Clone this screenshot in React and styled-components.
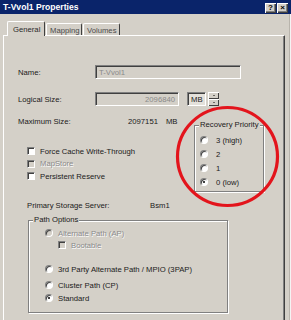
import React from "react";
import styled, { createGlobalStyle } from "styled-components";

const GlobalStyle = createGlobalStyle`
  html, body {
    margin: 0;
    padding: 0;
    background: #d4d0c8;
  }
  body {
    font-family: "Liberation Sans", Arial, sans-serif;
    font-size: 7.7px;
    color: #1a1a1a;
  }
`;

const Window = styled.div`
  position: relative;
  width: 291px;
  height: 320px;
  overflow: hidden;
  background: #d4d0c8;
  box-shadow: inset -1px 0 #f4f4f4, inset -2px 0 #b8b4ac;
`;

const TitleBar = styled.div`
  display: flex;
  align-items: center;
  height: 14px;
  padding: 0 3px;
  background: #0a246a;
  color: #fff;
  font-weight: bold;
  font-size: 8.6px;
`;

const CaptionButtons = styled.div`
  display: flex;
  gap: 1px;
  margin-left: auto;
  margin-top: 1px;
`;

const CapButton = styled.div`
  width: 11px;
  height: 10px;
  box-sizing: border-box;
  display: flex;
  align-items: center;
  justify-content: center;
  background: #d4d0c8;
  color: #000;
  font-size: 8px;
  font-weight: bold;
  line-height: 1;
  box-shadow: inset 1px 1px #fff, inset -1px -1px #404040, inset -2px -2px #808080;
`;

const Body = styled.div`
  padding: 7px 6px 0 3px;
`;

const TabStrip = styled.div`
  display: flex;
  align-items: flex-end;
  padding-left: 4px;
  gap: 1px;
  position: relative;
  z-index: 1;
`;

const Tab = styled.div`
  box-sizing: border-box;
  height: ${(p) => (p.$active ? 15 : 12)}px;
  width: ${(p) => p.$w}px;
  margin-bottom: ${(p) => (p.$active ? -1 : 0)}px;
  padding: ${(p) => (p.$active ? "3px 0 0 5px" : "2px 0 0 3px")};
  background: #d4d0c8;
  color: ${(p) => (p.$active ? "#2a2a2a" : "#4a4a4a")};
  border-top: 1px solid #fff;
  border-left: 1px solid #fff;
  border-right: 1px solid #404040;
  border-radius: 2px 2px 0 0;
`;

const Panel = styled.div`
  box-sizing: border-box;
  width: 282px;
  height: 300px;
  padding: 29px 0 0 14px;
  border-top: 1px solid #fff;
  border-left: 1px solid #fff;
  border-right: 1px solid #404040;
  box-shadow: inset -1px 0 #808080;
`;

const Row = styled.div`
  display: flex;
  align-items: center;
  height: ${(p) => p.$h || 14}px;
  margin-top: ${(p) => p.$mt || 0}px;
  padding-left: ${(p) => p.$indent || 0}px;
`;

const Label = styled.span`
  width: ${(p) => p.$w}px;
  flex: none;
  white-space: nowrap;
`;

const TextBox = styled.div`
  box-sizing: border-box;
  width: ${(p) => p.$w}px;
  height: 14px;
  display: flex;
  align-items: center;
  justify-content: ${(p) => (p.$right ? "flex-end" : "flex-start")};
  padding: 0 3px;
  background: ${(p) => (p.$disabled ? "#d4d0c8" : "#e4e1db")};
  color: ${(p) => (p.$disabled ? "#8a8a8a" : "#1a1a1a")};
  border: 1px solid;
  border-color: #808080 #fff #fff #808080;
  box-shadow: inset 1px 1px #404040;
`;

const Spinner = styled.div`
  display: flex;
  flex-direction: column;
  margin-left: 2px;
`;

const SpinButton = styled.div`
  box-sizing: border-box;
  width: 11px;
  height: 7px;
  display: flex;
  align-items: center;
  justify-content: center;
  background: #d4d0c8;
  box-shadow: inset 1px 1px #fff, inset -1px -1px #404040;
  &::after {
    content: "";
    width: 0;
    height: 0;
    border-left: 1.5px solid transparent;
    border-right: 1.5px solid transparent;
    ${(p) => (p.$down ? "border-top: 1.5px solid #000;" : "border-bottom: 1.5px solid #000;")}
  }
`;

const Value = styled.span`
  margin-left: ${(p) => p.$ml || 0}px;
`;

const Middle = styled.div`
  display: flex;
  margin-top: 8px;
`;

const LeftColumn = styled.div`
  width: 176px;
  display: flex;
  flex-direction: column;
`;

const CheckRow = styled.div`
  display: flex;
  align-items: center;
  height: 12.5px;
  padding-left: ${(p) => p.$indent || 0}px;
  margin-top: ${(p) => p.$mt || 0}px;
  gap: 5px;
  color: ${(p) => (p.$disabled ? "#8a8a8a" : "inherit")};
  text-shadow: ${(p) => (p.$disabled ? "0.7px 0.7px 0 #fff" : "none")};
`;

const CheckBox = styled.span`
  box-sizing: border-box;
  width: 8px;
  height: 8px;
  flex: none;
  background: ${(p) => (p.$disabled ? "#d4d0c8" : "#fff")};
  border: 1px solid;
  border-color: #808080 #fff #fff #808080;
  box-shadow: inset 1px 1px #404040;
`;

const Radio = styled.span`
  position: relative;
  box-sizing: border-box;
  width: 8px;
  height: 8px;
  flex: none;
  border-radius: 50%;
  background: ${(p) => (p.$disabled ? "#d4d0c8" : "#fff")};
  border: 1px solid;
  border-color: #808080 #fff #fff #808080;
  box-shadow: inset 1px 1px #404040;
  &::after {
    content: "";
    display: ${(p) => (p.$checked ? "block" : "none")};
    position: absolute;
    left: 2px;
    top: 2px;
    width: 2px;
    height: 2px;
    border-radius: 50%;
    background: #000;
  }
`;

const GroupBox = styled.fieldset`
  position: relative;
  box-sizing: border-box;
  margin: ${(p) => p.$margin};
  width: ${(p) => p.$w}px;
  height: ${(p) => p.$h}px;
  padding: ${(p) => p.$pad};
  border: 1px solid #808080;
  box-shadow: inset 1px 1px #fff, 1px 1px #fff;
  min-width: 0;
`;

const GroupTitle = styled.span`
  position: absolute;
  top: -6px;
  left: ${(p) => p.$left || 4}px;
  padding: 0 1px;
  background: #d4d0c8;
  line-height: 10px;
  white-space: nowrap;
`;

const OptionRow = styled.div`
  display: flex;
  align-items: center;
  height: ${(p) => p.$h || 12}px;
  margin-top: ${(p) => p.$mt || 0}px;
  padding-left: ${(p) => p.$indent || 0}px;
  gap: ${(p) => p.$gap || 5}px;
  color: ${(p) => (p.$disabled ? "#8a8a8a" : "inherit")};
  text-shadow: ${(p) => (p.$disabled ? "0.7px 0.7px 0 #fff" : "none")};
`;

const Highlight = styled.svg`
  position: absolute;
  left: 0;
  top: 0;
  pointer-events: none;
`;

const priorities = ["3 (high)", "2", "1", "0 (low)"];

const App = () => {
  return (
    <Window>
      <GlobalStyle />
      <TitleBar>
        T-Vvol1 Properties
        <CaptionButtons>
          <CapButton>?</CapButton>
          <CapButton>×</CapButton>
        </CaptionButtons>
      </TitleBar>
      <Body>
        <TabStrip>
          <Tab $active $w={38}>General</Tab>
          <Tab $w={36}>Mapping</Tab>
          <Tab $w={37}>Volumes</Tab>
        </TabStrip>
        <Panel>
          <Row>
            <Label $w={77}>Name:</Label>
            <TextBox $w={146} $disabled>T-Vvol1</TextBox>
          </Row>
          <Row $mt={13}>
            <Label $w={77}>Logical Size:</Label>
            <TextBox $w={84} $disabled $right>2096840</TextBox>
            <Value $ml={8} />
            <TextBox $w={19}>MB</TextBox>
            <Spinner>
              <SpinButton />
              <SpinButton $down />
            </Spinner>
          </Row>
          <Middle>
            <LeftColumn>
              <Row>
                <Label $w={110}>Maximum Size:</Label>
                <Value>2097151</Value>
                <Value $ml={8}>MB</Value>
              </Row>
              <CheckRow $indent={9} $mt={17}>
                <CheckBox />
                Force Cache Write-Through
              </CheckRow>
              <CheckRow $indent={9} $disabled>
                <CheckBox $disabled />
                MapStore
              </CheckRow>
              <CheckRow $indent={9}>
                <CheckBox />
                Persistent Reserve
              </CheckRow>
            </LeftColumn>
            <GroupBox $w={70} $h={67} $margin="11px 0 0 0" $pad="7px 0 0 5px">
              <GroupTitle>Recovery Priority</GroupTitle>
              {priorities.map((p, i) => (
                <OptionRow key={p} $h={14} $gap={8}>
                  <Radio $checked={i === priorities.length - 1} />
                  {p}
                </OptionRow>
              ))}
            </GroupBox>
          </Middle>
          <Row $h={12} $mt={7} $indent={9}>
            <Label $w={123}>Primary Storage Server:</Label>
            <Value>Bsm1</Value>
          </Row>
          <GroupBox $w={200} $h={93} $margin="9px 0 0 10px" $pad="6px 0 0 16px">
            <GroupTitle>Path Options</GroupTitle>
            <OptionRow $disabled>
              <Radio $disabled />
              Alternate Path (AP)
            </OptionRow>
            <OptionRow $disabled $indent={13}>
              <CheckBox $disabled />
              Bootable
            </OptionRow>
            <OptionRow $mt={12}>
              <Radio />
              3rd Party Alternate Path / MPIO (3PAP)
            </OptionRow>
            <OptionRow $mt={4}>
              <Radio />
              Cluster Path (CP)
            </OptionRow>
            <OptionRow $mt={1}>
              <Radio $checked />
              Standard
            </OptionRow>
          </GroupBox>
        </Panel>
      </Body>
      <Highlight width="291" height="320" viewBox="0 0 291 320">
        <ellipse cx="227.5" cy="156.5" rx="50" ry="49" fill="none" stroke="#e3141c" strokeWidth="3.2" />
      </Highlight>
    </Window>
  );
};

export default App;
